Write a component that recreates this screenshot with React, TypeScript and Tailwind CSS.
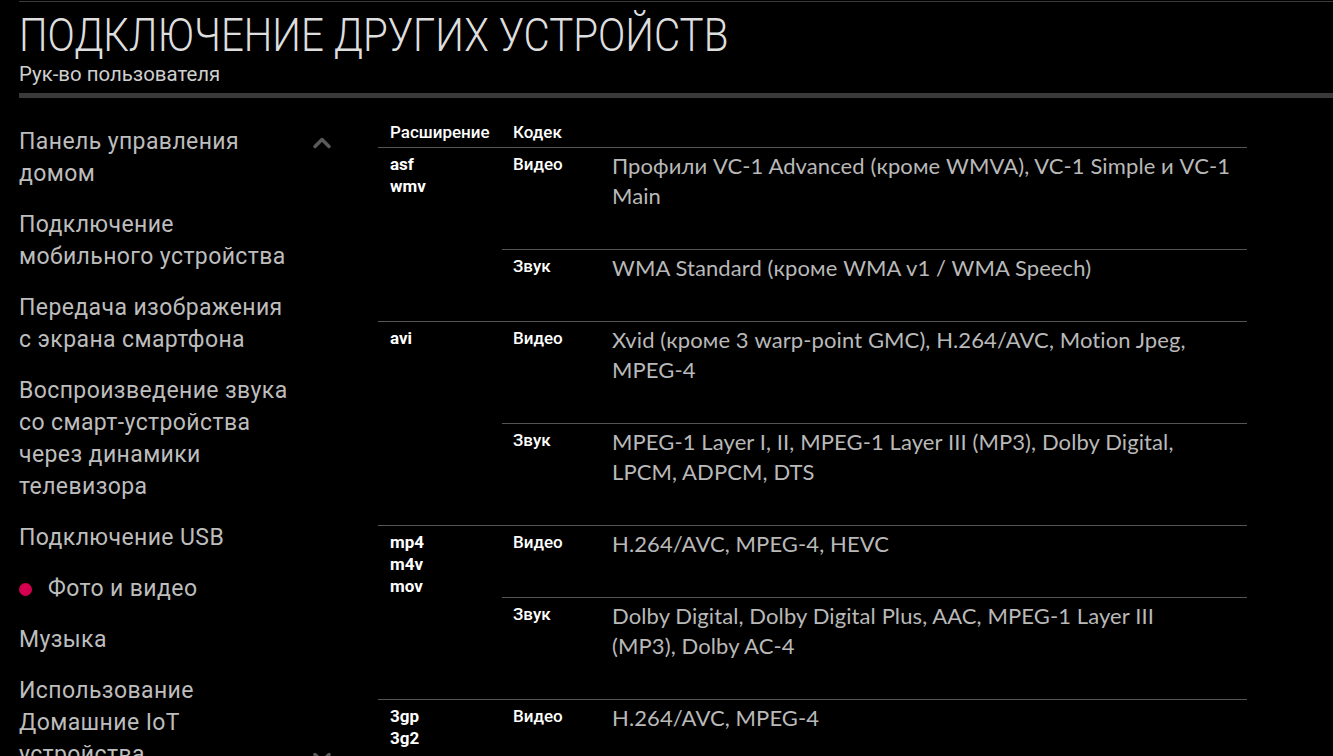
import { ChevronDown, ChevronUp } from 'lucide-react';

const navItems = [
  { label: ['Панель управления', 'домом'] },
  { label: ['Подключение', 'мобильного устройства'] },
  { label: ['Передача изображения', 'с экрана смартфона'] },
  { label: ['Воспроизведение звука', 'со смарт-устройства', 'через динамики', 'телевизора'] },
  { label: ['Подключение USB'] },
  { label: ['Фото и видео'], active: true },
  { label: ['Музыка'] },
  { label: ['Использование', 'Домашние IoT', 'устройства'] },
];

const formats = [
  {
    ext: ['asf', 'wmv'],
    codecs: [
      { kind: 'Видео', text: ['Профили VC-1 Advanced (кроме WMVA), VC-1 Simple и VC-1', 'Main'] },
      { kind: 'Звук', text: ['WMA Standard (кроме WMA v1 / WMA Speech)'] },
    ],
  },
  {
    ext: ['avi'],
    codecs: [
      { kind: 'Видео', text: ['Xvid (кроме 3 warp-point GMC), H.264/AVC, Motion Jpeg,', 'MPEG-4'] },
      { kind: 'Звук', text: ['MPEG-1 Layer I, II, MPEG-1 Layer III (MP3), Dolby Digital,', 'LPCM, ADPCM, DTS'] },
    ],
  },
  {
    ext: ['mp4', 'm4v', 'mov'],
    codecs: [
      { kind: 'Видео', text: ['H.264/AVC, MPEG-4, HEVC'] },
      { kind: 'Звук', text: ['Dolby Digital, Dolby Digital Plus, AAC, MPEG-1 Layer III', '(MP3), Dolby AC-4'] },
    ],
  },
  {
    ext: ['3gp', '3g2'],
    codecs: [
      { kind: 'Видео', text: ['H.264/AVC, MPEG-4'] },
      { kind: 'Звук', text: ['AAC, AMR-NB, AMR-WB'] },
    ],
  },
];

export default function App() {
  return (
    <div className="w-full h-[756px] overflow-hidden bg-black font-['Roboto',sans-serif]">
      {/* header */}
      <header className="pl-[19px]">
        <div className="mt-px h-px bg-[#3a3a3a]" />
        <h1 className="mt-[11px] h-[44px] text-[46px] leading-[44px] font-light text-[#dedede] whitespace-nowrap origin-left scale-x-[0.876]">
          ПОДКЛЮЧЕНИЕ ДРУГИХ УСТРОЙСТВ
        </h1>
        <p className="mt-[7px] h-[20px] text-[20px] leading-[20px] text-[#cfcfcf] origin-left scale-x-[1.02] whitespace-nowrap">
          Рук-во пользователя
        </p>
        <div className="mt-[9px] h-[5px] bg-[#3a3a3a]" />
      </header>

      <main className="flex pl-[19px]">
        {/* sidebar */}
        <nav className="relative w-[323px] h-[660px] shrink-0 pt-[28px] overflow-hidden">
          <ChevronUp className="absolute right-[6px] top-[31px] size-[28px] text-[#5a5a5a]" strokeWidth={3} />
          <ul className="flex flex-col gap-[19px] text-[23px] leading-[32px] tracking-[0.4px] text-[#bdbdbd]">
            {navItems.map((item, i) => (
              <li key={i} className="flex items-center gap-[16px]">
                {item.active && <span className="size-[13px] rounded-full bg-[#d4004f] shrink-0" />}
                <span>
                  {item.label.map((l, j) => (
                    <span key={j} className="block whitespace-nowrap">{l}</span>
                  ))}
                </span>
              </li>
            ))}
          </ul>
          <ChevronDown className="absolute right-[6px] top-[646px] size-[28px] text-[#5a5a5a]" strokeWidth={3} />
        </nav>

        {/* table */}
        <section className="ml-[36px] w-[869px] pt-[23px]">
          <div className="flex h-[27px] border-b border-[#555] text-[17px] leading-[22px] font-medium text-white">
            <div className="w-[124px] pl-[12px]">Расширение</div>
            <div className="pl-[11px]">Кодек</div>
          </div>
          {formats.map((f, i) => (
            <div key={i} className="flex border-b border-[#555]">
              <div className="w-[124px] pl-[12px] pt-[5px] text-[17px] leading-[22px] font-bold text-white">
                {f.ext.map((e) => (
                  <div key={e}>{e}</div>
                ))}
              </div>
              <div className="flex-1">
                {f.codecs.map((c, j) => (
                  <div key={j} className={`flex ${j > 0 ? 'border-t border-[#555]' : ''}`}>
                    <div className="w-[110px] shrink-0 pl-[11px] pt-[5px] text-[17px] leading-[22px] font-medium text-white">
                      {c.kind}
                    </div>
                    <div className="flex-1 pr-[8px] pt-[3px] pb-[38px] font-['Lato',sans-serif] text-[22px] leading-[30px] tracking-[0.1px] text-[#b9b9b9]">
                      {c.text.map((t, k) => (
                        <div key={k} className="whitespace-nowrap">{t}</div>
                      ))}
                    </div>
                  </div>
                ))}
              </div>
            </div>
          ))}
        </section>
      </main>
    </div>
  );
}
